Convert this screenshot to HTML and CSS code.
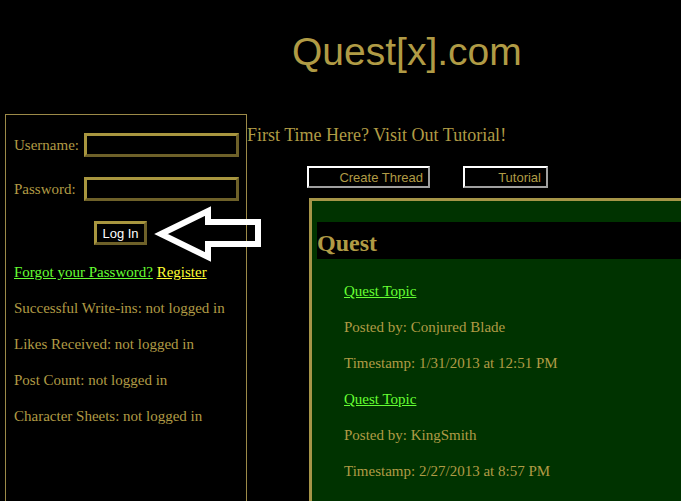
FILE: index.html
```html
<!DOCTYPE html>
<html>
<head>
<meta charset="utf-8">
<title>Quest[x].com</title>
<link rel="stylesheet" href="styles.css">
</head>
<body>
<h1 class="site-title">Quest[x].com</h1>
<div class="layout">
  <aside class="sidebar">
    <form class="login">
      <label class="lbl" for="u">Username:</label>
      <input class="field" id="u" type="text">
      <label class="lbl" for="p">Password:</label>
      <input class="field" id="p" type="password">
    </form>
    <button class="login-btn" type="button">Log In</button>
    <p class="side-line"><a class="lnk-green" href="#">Forgot your Password?</a> <a class="lnk-yellow" href="#">Register</a></p>
    <p class="side-line">Successful Write-ins: not logged in</p>
    <p class="side-line">Likes Received: not logged in</p>
    <p class="side-line">Post Count: not logged in</p>
    <p class="side-line">Character Sheets: not logged in</p>
  </aside>
  <main class="main">
    <p class="intro">First Time Here? Visit Out Tutorial!</p>
    <div class="actions">
      <button class="act act-create" type="button">Create Thread</button>
      <button class="act act-tut" type="button">Tutorial</button>
    </div>
    <section class="panel">
      <h2 class="panel-title">Quest</h2>
      <div class="topics">
        <p class="tline"><a class="lnk-green" href="#">Quest Topic</a></p>
        <p class="tline">Posted by: Conjured Blade</p>
        <p class="tline">Timestamp: 1/31/2013 at 12:51 PM</p>
        <p class="tline"><a class="lnk-green" href="#">Quest Topic</a></p>
        <p class="tline">Posted by: KingSmith</p>
        <p class="tline">Timestamp: 2/27/2013 at 8:57 PM</p>
      </div>
    </section>
  </main>
</div>
<svg class="arrow" width="120" height="64" viewBox="150 203 120 64" xmlns="http://www.w3.org/2000/svg">
  <polygon points="161,234 208,211 208,222 258,222 258,244 208,244 208,257" fill="none" stroke="#ffffff" stroke-width="6" stroke-linejoin="miter" stroke-miterlimit="10"/>
</svg>
</body>
</html>
```

FILE: styles.css
```css
html, body {
  margin: 0;
  padding: 0;
  background: #000;
  overflow: hidden;
}
body {
  font-family: "Liberation Serif", "Times New Roman", serif;
  color: #b09b45;
  height: 501px;
  position: relative;
}
.site-title {
  margin: 0;
  padding: 30px 0 0 292px;
  font-family: "Liberation Sans", Arial, sans-serif;
  font-weight: normal;
  font-size: 39px;
  line-height: 44px;
  color: #b09b45;
}
.layout {
  display: flex;
  align-items: flex-start;
  margin-top: 40px;
}
.sidebar {
  flex: none;
  margin-left: 5px;
  width: 224px;
  min-height: 430px;
  border: 1px solid #9c8a48;
  padding: 18px 8px 0 8px;
}
.login {
  display: grid;
  grid-template-columns: auto 155px;
  column-gap: 5px;
  row-gap: 20px;
  align-items: center;
  margin: 0;
}
.lbl {
  font-size: 15px;
  line-height: 18px;
}
.field {
  box-sizing: border-box;
  width: 155px;
  height: 24px;
  margin: 0;
  padding: 0;
  background: #000;
  border: 3px solid;
  border-color: #a8963f #6e6129 #6e6129 #a8963f;
  outline: none;
}
.login-btn {
  display: block;
  box-sizing: border-box;
  margin: 20px 0 0 80px;
  width: 53px;
  height: 24px;
  padding: 0;
  background: #000;
  color: #fff;
  font-family: "Liberation Sans", Arial, sans-serif;
  font-size: 13px;
  border: 3px solid;
  border-color: #a8963f #6e6129 #6e6129 #a8963f;
}
.side-line {
  margin: 18px 0;
  font-size: 15px;
  line-height: 18px;
}
.lnk-green {
  color: #66ff33;
  text-decoration: underline;
}
.lnk-yellow {
  color: #ffff33;
  text-decoration: underline;
}
.main {
  flex: none;
}
.intro {
  margin: 11px 0 0 0;
  font-size: 18px;
  line-height: 21px;
}
.actions {
  display: flex;
  gap: 33px;
  margin: 20px 0 0 60px;
}
.act {
  box-sizing: border-box;
  height: 22px;
  padding: 0 5px 0 0;
  margin: 0;
  background: #000;
  color: #b09b45;
  font-family: "Liberation Sans", Arial, sans-serif;
  font-size: 13px;
  text-align: right;
  border: 2px solid;
  border-color: #ffffff #a0a0a0 #a0a0a0 #ffffff;
}
.act-create { width: 123px; }
.act-tut { width: 85px; }
.panel {
  margin: 10px 0 0 62px;
  width: 440px;
  min-height: 320px;
  background: #003300;
  border: 3px solid #a69548;
}
.panel-title {
  margin: 21px 0 0 5px;
  padding: 8px 0 2px 0;
  background: #000;
  font-size: 24px;
  line-height: 27px;
  font-weight: bold;
  color: #b09b45;
}
.topics {
  padding: 5px 0 0 32px;
}
.tline {
  margin: 18px 0;
  font-size: 15px;
  line-height: 18px;
}
.arrow {
  position: absolute;
  left: 150px;
  top: 203px;
}
```
